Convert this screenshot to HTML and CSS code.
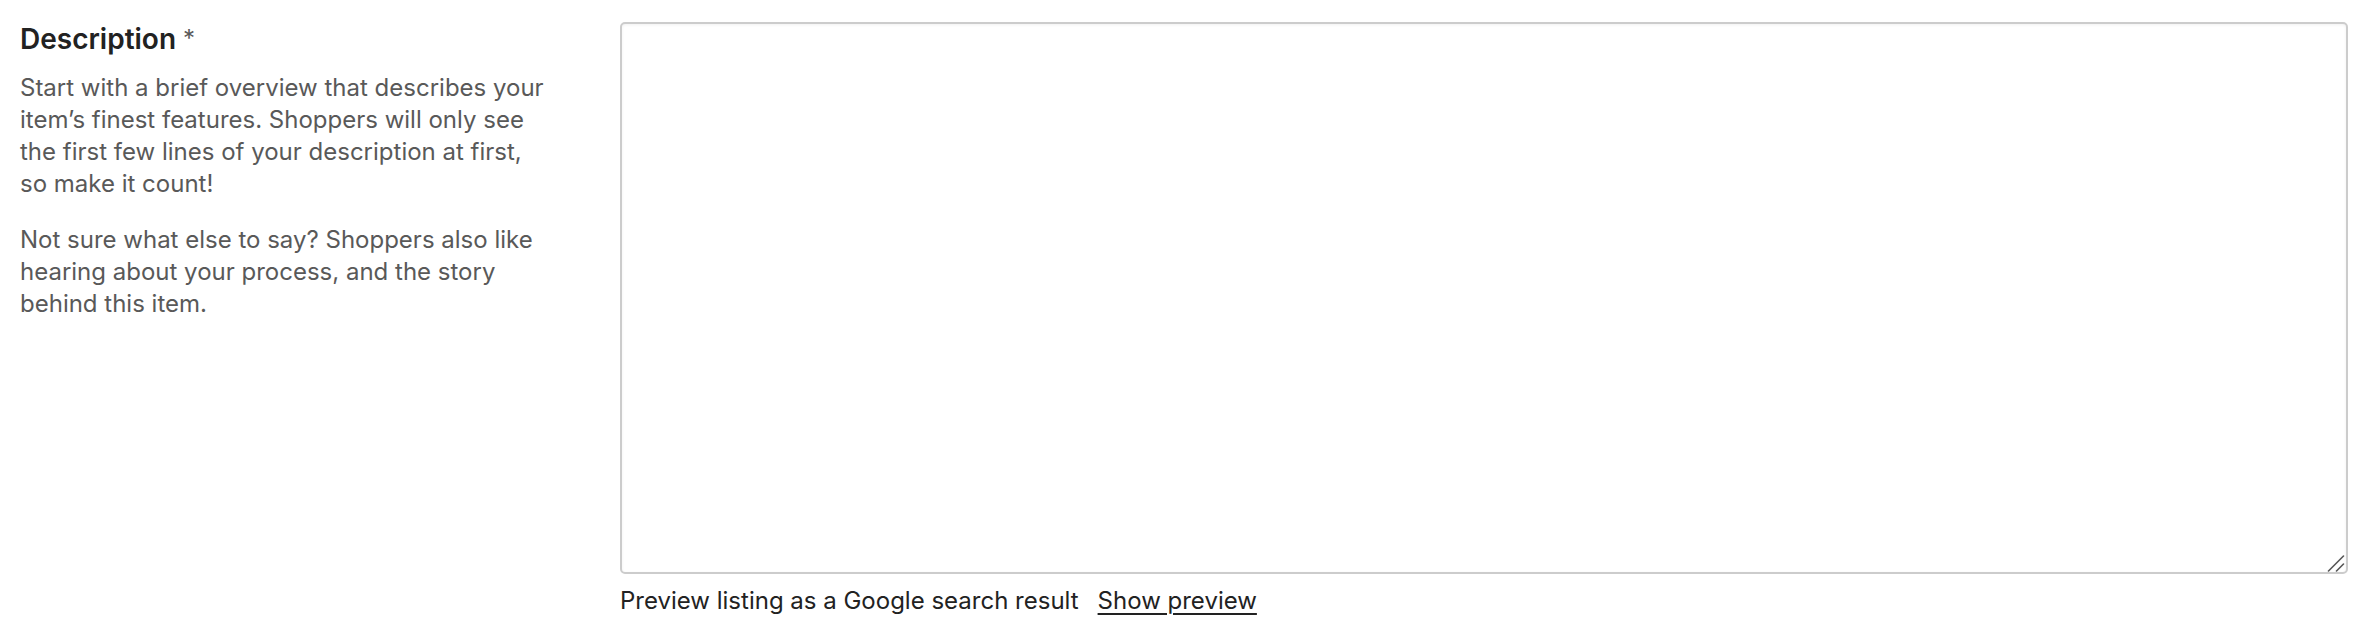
FILE: index.html
```html
<!DOCTYPE html>
<html lang="en">
<head>
<meta charset="utf-8">
<title>Description</title>
<link rel="stylesheet" href="styles.css">
</head>
<body>
<div class="field">
  <div class="field-info">
    <h2 class="field-label">Description <span class="req">*</span></h2>
    <p class="field-help">Start with a brief overview that describes your item’s finest features. Shoppers will only see the first few lines of your description at first, so make it count!</p>
    <p class="field-help">Not sure what else to say? Shoppers also like hearing about your process, and the story behind this item.</p>
  </div>
  <div class="field-input">
    <div class="area-wrap">
      <textarea class="desc-area" aria-label="Description"></textarea>
      <svg class="grip" width="18" height="18" viewBox="0 0 18 18" aria-hidden="true">
        <line x1="1.5" y1="17" x2="16.5" y2="2" />
        <line x1="9.5" y1="17" x2="16.5" y2="10" />
      </svg>
    </div>
    <div class="preview-row">
      <span class="preview-text">Preview listing as a Google search result</span>
      <a class="preview-link" href="#">Show preview</a>
    </div>
  </div>
</div>
</body>
</html>
```
FILE: styles.css
```css
* { box-sizing: border-box; }
html, body { margin: 0; padding: 0; background: #fff; }
body {
  font-family: "Inter", "Liberation Sans", sans-serif;
  color: #222;
}
.field {
  display: grid;
  grid-template-columns: 530px 1fr;
  column-gap: 70px;
  padding: 22px 30px 0 20px;
}
.field-label {
  margin: 0 0 16px;
  font-size: 28px;
  line-height: 34px;
  font-weight: 600;
  color: #222;
}
.req {
  color: #595959;
  font-weight: 400;
  font-size: 24px;
  vertical-align: top;
}
.field-help {
  margin: 0 0 24px;
  font-size: 24px;
  line-height: 32px;
  color: #595959;
}
.field-input {
  display: flex;
  flex-direction: column;
}
.area-wrap {
  position: relative;
}
.desc-area {
  display: block;
  width: 100%;
  height: 552px;
  margin: 0;
  border: 2px solid #cccccc;
  border-radius: 5px;
  box-shadow: inset 0 1px 3px rgba(0, 0, 0, 0.06);
  background: #fff;
  resize: none;
  font-family: inherit;
  font-size: 24px;
  padding: 12px;
}
.grip {
  position: absolute;
  right: 3px;
  bottom: 2px;
  pointer-events: none;
}
.grip line {
  stroke: #555;
  stroke-width: 1.6;
  stroke-linecap: round;
}
.preview-row {
  margin-top: 11px;
  display: flex;
  align-items: baseline;
  gap: 19px;
  font-size: 24px;
  line-height: 32px;
  color: #222;
}
.preview-link {
  color: #222;
  text-decoration: underline;
  text-decoration-thickness: 2px;
  text-underline-offset: 4px;
}
```
